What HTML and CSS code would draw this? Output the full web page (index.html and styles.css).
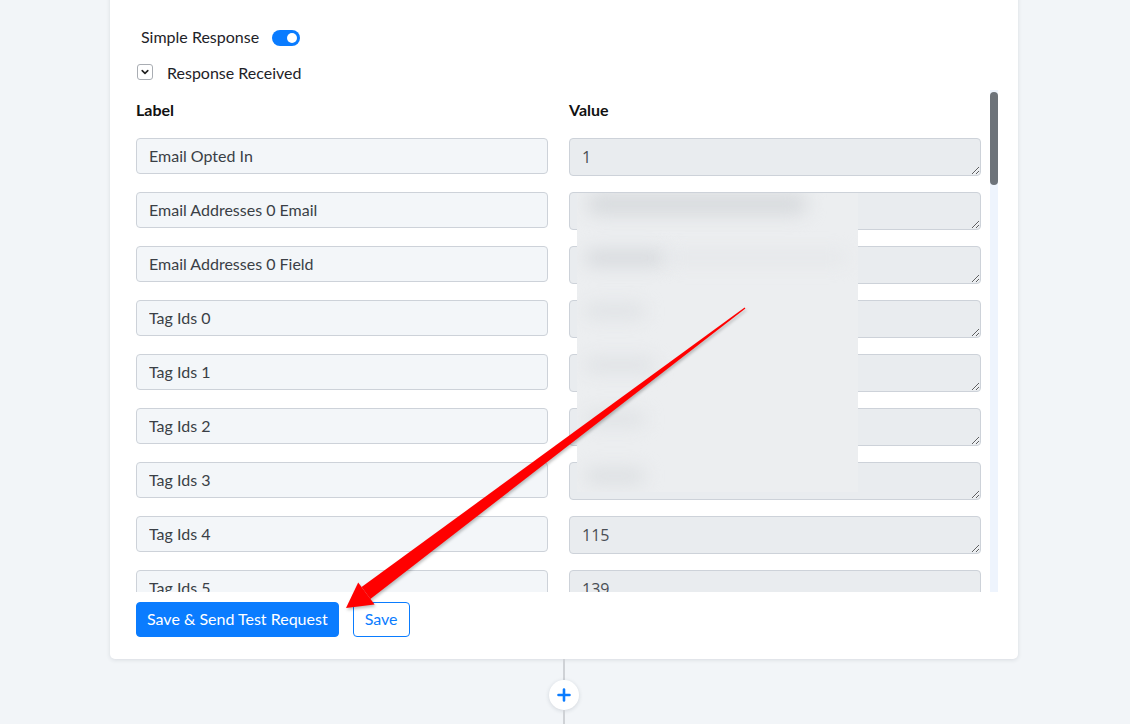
FILE: index.html
```html
<!DOCTYPE html>
<html lang="en">
<head>
<meta charset="utf-8">
<title>Response Received</title>
<link rel="stylesheet" href="styles.css">
</head>
<body>
<div class="page">
  <section class="card">
    <div class="option-row simple">
      <span class="option-text">Simple Response</span>
      <span class="toggle on"><span class="knob"></span></span>
    </div>
    <div class="option-row received">
      <span class="chev-box">
        <svg width="10" height="10" viewBox="0 0 10 10"><path d="M2.2 3.6 L5 6.4 L7.8 3.6" fill="none" stroke="#222" stroke-width="1.6" stroke-linecap="round" stroke-linejoin="round"/></svg>
      </span>
      <span class="option-text">Response Received</span>
    </div>

    <div class="fields">
      <div class="fields-view">
        <div class="grid head">
          <div class="col-title">Label</div>
          <div class="col-title">Value</div>
        </div>
        <div class="grid rows">
          <input class="label-box" value="Email Opted In" readonly>
          <textarea class="value-box" readonly>1</textarea>
          <input class="label-box" value="Email Addresses 0 Email" readonly>
          <textarea class="value-box" readonly></textarea>
          <input class="label-box" value="Email Addresses 0 Field" readonly>
          <textarea class="value-box" readonly></textarea>
          <input class="label-box" value="Tag Ids 0" readonly>
          <textarea class="value-box" readonly></textarea>
          <input class="label-box" value="Tag Ids 1" readonly>
          <textarea class="value-box" readonly></textarea>
          <input class="label-box" value="Tag Ids 2" readonly>
          <textarea class="value-box" readonly></textarea>
          <input class="label-box" value="Tag Ids 3" readonly>
          <textarea class="value-box" readonly></textarea>
          <input class="label-box" value="Tag Ids 4" readonly>
          <textarea class="value-box" readonly>115</textarea>
          <input class="label-box" value="Tag Ids 5" readonly>
          <textarea class="value-box" readonly>139</textarea>
        </div>
      </div>
      <div class="scroll-track"><div class="scroll-thumb"></div></div>
    </div>

    <div class="actions">
      <button class="btn btn-primary">Save &amp; Send Test Request</button>
      <button class="btn btn-outline">Save</button>
    </div>
  </section>

  <div class="connector">
    <span class="line top"></span>
    <span class="add-step">
      <svg width="14" height="14" viewBox="0 0 14 14"><path d="M7 1.5 V12.5 M1.5 7 H12.5" stroke="#0a7cff" stroke-width="2.6" stroke-linecap="round"/></svg>
    </span>
    <span class="line bottom"></span>
  </div>
</div>

<!-- redacted values -->
<div class="redacted">
  <span class="smudge s1"></span>
  <span class="smudge s2"></span>
  <span class="smudge s3"></span>
  <span class="smudge s4"></span>
  <span class="smudge s5"></span>
  <span class="smudge s6"></span>
  <span class="smudge s7"></span>
</div>

<!-- pointer arrow -->
<svg class="pointer" width="1130" height="724" viewBox="0 0 1130 724">
  <polygon points="744.6,307.4 745.4,308.6 370.4,598.9 361.6,587.1" fill="#ff0000"/>
  <polygon points="346,608 358.2,582.6 374.6,604.6" fill="#ff0000"/>
</svg>
</body>
</html>
```

FILE: styles.css
```css
* { box-sizing: border-box; }

html, body {
  margin: 0;
  padding: 0;
}

body {
  background: #f2f5f8;
  font-family: "Lato", "Liberation Sans", sans-serif;
  color: #1f2329;
  width: 1130px;
  height: 724px;
  overflow: hidden;
}

.page {
  display: flex;
  flex-direction: column;
  align-items: center;
  width: 908px;
  margin-left: 110px;
}

.card {
  width: 908px;
  margin-top: -8px;
  padding: 34px 20px 22px 26px;
  background: #fff;
  border-radius: 5px;
  box-shadow: 0 1px 4px rgba(30, 40, 60, 0.12);
}

.option-row {
  display: flex;
  align-items: center;
  height: 20px;
}

.option-row.simple {
  padding-left: 5px;
  gap: 13px;
}

.option-row.received {
  margin-top: 16px;
  padding-left: 1px;
  gap: 14px;
}

.option-text {
  font-size: 16px;
  color: #1e2228;
}

.toggle {
  position: relative;
  display: inline-block;
  width: 28px;
  height: 16px;
  margin-top: 4px;
  border-radius: 8px;
  background: #0a7cff;
}

.toggle .knob {
  position: absolute;
  top: 3px;
  right: 3px;
  width: 10px;
  height: 10px;
  border-radius: 50%;
  background: #fff;
}

.chev-box {
  display: inline-flex;
  align-items: center;
  justify-content: center;
  width: 16px;
  height: 16px;
  border: 1px solid #a9adb3;
  border-radius: 3px;
}

.fields {
  display: flex;
  margin-top: 8px;
  height: 502px;
}

.fields-view {
  width: 854px;
  height: 502px;
  overflow: hidden;
  padding-top: 10px;
}

.grid {
  display: grid;
  grid-template-columns: 412px 412px;
  column-gap: 21px;
}

.col-title {
  font-weight: 700;
  font-size: 16px;
  line-height: 20px;
  color: #111;
}

.rows {
  margin-top: 18px;
  row-gap: 16px;
}

.label-box,
.value-box {
  display: block;
  width: 412px;
  margin: 0;
  border: 1px solid #cdd2d9;
  border-radius: 4px;
  outline: none;
}

.label-box {
  height: 36px;
  padding: 0 12px 2px;
  background: #f3f6f9;
  font-family: "Lato", "Liberation Sans", sans-serif;
  font-size: 16px;
  color: #3a3f46;
}

.value-box {
  height: 38px;
  padding: 6px 12px;
  background: #e9ecef;
  font-family: "Open Sans", "Liberation Sans", sans-serif;
  font-size: 16px;
  line-height: 24px;
  color: #4a4f55;
  resize: vertical;
  overflow: hidden;
}

.scroll-track {
  width: 8px;
  height: 502px;
  background: #eef4fd;
}

.scroll-thumb {
  width: 8px;
  height: 93px;
  margin-top: 2px;
  border-radius: 4px;
  background: #6d737a;
}

.actions {
  display: flex;
  gap: 14px;
  margin-top: 10px;
}

.btn {
  height: 35px;
  padding-bottom: 2px;
  border-radius: 4px;
  font-family: "Lato", "Liberation Sans", sans-serif;
  font-size: 16px;
  line-height: 1;
  cursor: pointer;
}

.btn-primary {
  padding-left: 10px;
  padding-right: 10px;
  border: 1px solid #0a7cff;
  background: #0a7cff;
  color: #fff;
}

.btn-outline {
  padding-left: 11px;
  padding-right: 11px;
  border: 1px solid #0a7cff;
  background: #fff;
  color: #0a7cff;
}

.connector {
  display: flex;
  flex-direction: column;
  align-items: center;
}

.connector .line {
  width: 2px;
  background: #cfd2d6;
}

.connector .line.top { height: 21px; }
.connector .line.bottom { height: 40px; }

.add-step {
  display: flex;
  align-items: center;
  justify-content: center;
  width: 30px;
  height: 30px;
  border-radius: 50%;
  background: #fff;
  box-shadow: 0 1px 4px rgba(30, 40, 60, 0.15);
}

/* blurred-out values panel */
.redacted {
  position: absolute;
  left: 577px;
  top: 193px;
  width: 281px;
  height: 299px;
  overflow: hidden;
  background: #eceef0;
}

.smudge {
  position: absolute;
  display: block;
  background: #d3d6da;
  border-radius: 10px;
  filter: blur(9px);
}

.s1 { left: 10px; top: 0; width: 220px; height: 22px; background: #d7dadd; }
.s2 { left: 8px; top: 58px; width: 80px; height: 14px; }
.s3 { left: 8px; top: 112px; width: 60px; height: 12px; background: #dcdfe2; }
.s4 { left: 8px; top: 166px; width: 70px; height: 12px; background: #dcdfe2; }
.s5 { left: 8px; top: 220px; width: 60px; height: 12px; background: #dcdfe2; }
.s6 { left: 8px; top: 276px; width: 60px; height: 14px; background: #dadde0; }
.s7 { left: 90px; top: 60px; width: 180px; height: 10px; background: #e3e5e8; }

.pointer {
  position: absolute;
  left: 0;
  top: 0;
  pointer-events: none;
  filter: drop-shadow(1px 2px 1.5px rgba(0, 0, 0, 0.25));
}
```
